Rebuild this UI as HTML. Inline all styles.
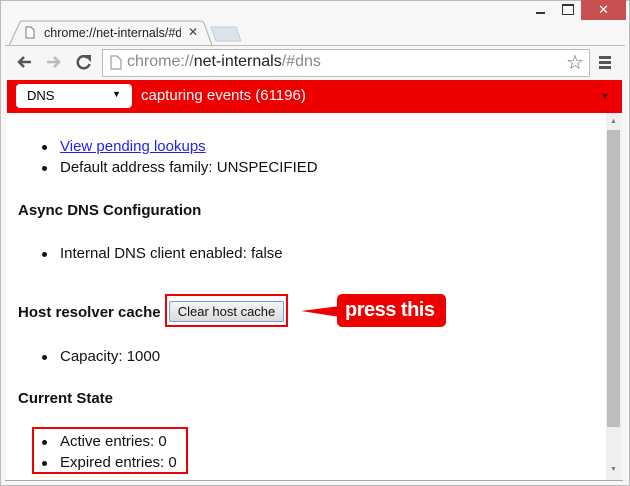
<!DOCTYPE html>
<html><head><style>
body{margin:0;width:630px;height:486px;background:#fff;position:relative;overflow:hidden;font-family:"Liberation Sans",sans-serif}
.a{position:absolute}
.t{position:absolute;font-size:15px;color:#111;white-space:nowrap}
.b{font-weight:bold}
.dot{position:absolute;width:5px;height:5px;border-radius:50%;background:#111}
</style></head><body>
<div class="a" style="left:0;top:0;width:628px;height:484px;border:1px solid #bbb;background:#f7f7f7"></div>
<!-- window controls -->
<div class="a" style="left:536px;top:12px;width:9px;height:2px;background:#333"></div>
<div class="a" style="left:562px;top:4px;width:10px;height:8px;border:1px solid #333;border-top-width:2px"></div>
<div class="a" style="left:581px;top:0;width:45px;height:20px;background:#c75050;color:#fff;font-size:13px;text-align:center;line-height:20px">✕</div>
<!-- tab -->
<svg class="a" style="left:0;top:18px" width="250" height="30"><path d="M8 30 L20 4 Q21 3 23 3 L200 3 Q203 3 204 5 L213 30" fill="#f6f6f6" stroke="#aaa"/><path d="M211 9 L236 9 L241 23 L216 23 Z" fill="#dde3ea" stroke="#c5ccd5"/></svg>
<svg class="a" style="left:25px;top:26px" width="10" height="13"><path d="M1 1h5l3 3v8H1z" fill="#fff" stroke="#777"/></svg>
<div class="a" style="left:44px;top:26px;font-size:12.5px;color:#222;width:137px;overflow:hidden;white-space:nowrap">chrome://net-internals/#dns</div>
<div class="a" style="left:188px;top:25px;font-size:12px;color:#444">✕</div>
<div class="a" style="left:5px;top:45px;width:620px;height:35px;background:#f6f6f6;border-top:1px solid #bbb"></div>
<svg class="a" style="left:16px;top:54px" width="80" height="16"><path d="M15 8H3M8 3L3 8l5 5" fill="none" stroke="#555" stroke-width="2.5"/><path d="M31 8h12M38 3l5 5-5 5" fill="none" stroke="#bbb" stroke-width="2.5"/><path d="M72 4a6 6 0 1 0 1.5 6" fill="none" stroke="#555" stroke-width="2.5"/><path d="M68 1h7v7z" fill="#555"/></svg>
<div class="a" style="left:102px;top:49px;width:486px;height:26px;border:1px solid #bbb;background:#fff"></div>
<svg class="a" style="left:110px;top:55px" width="12" height="15"><path d="M1 1h6l4 4v9H1z" fill="#fff" stroke="#888"/></svg>
<div class="a" style="left:127px;top:53px;font-size:16px;color:#888;white-space:nowrap">chrome://<span style="color:#222">net-internals</span>/#dns</div>
<div class="a" style="left:566px;top:50px;font-size:20px;color:#666">☆</div>
<div class="a" style="left:599px;top:56px;width:12px;height:3px;background:#555;box-shadow:0 5px #555,0 10px #555"></div>
<!-- red bar -->
<div class="a" style="left:7px;top:80px;width:615px;height:33px;background:#ee0000"></div>
<div class="a" style="left:16px;top:84px;width:116px;height:24px;background:#fff;border-radius:4px"></div>
<div class="a" style="left:27px;top:88px;font-size:13px;color:#000">DNS</div>
<div class="a" style="left:112px;top:89px;font-size:9px;color:#000">▼</div>
<div class="a" style="left:141px;top:87px;font-size:15px;color:#fff">capturing events (61196)</div>
<div class="a" style="left:601px;top:92px;font-size:8px;color:#000">▼</div>
<!-- content -->
<div class="a" style="left:6px;top:113px;width:600px;height:367px;background:#fff"></div>
<div class="a" style="left:606px;top:113px;width:16px;height:367px;background:#f0f0f0"></div>
<div class="a" style="left:607px;top:130px;width:13px;height:297px;background:#bdbdbd"></div>
<div class="a" style="left:610px;top:118px;font-size:7px;color:#777">▲</div>
<div class="a" style="left:610px;top:466px;font-size:7px;color:#777">▼</div>
<div class="a" style="left:5px;top:480px;width:618px;height:1px;background:#aaa"></div>

<div class="dot" style="left:42px;top:145px"></div><div class="t" style="left:60px;top:138px;text-decoration:underline;color:#2222ee">View pending lookups</div>
<div class="dot" style="left:42px;top:166px"></div><div class="t" style="left:60px;top:159px">Default address family: UNSPECIFIED</div>
<div class="t b" style="left:18px;top:202px">Async DNS Configuration</div>
<div class="dot" style="left:42px;top:252px"></div><div class="t" style="left:60px;top:245px">Internal DNS client enabled: false</div>
<div class="t b" style="left:18px;top:304px">Host resolver cache</div>
<div class="a" style="left:165px;top:294px;width:123px;height:33px;border:2px solid #e00;box-sizing:border-box"></div>
<div class="a" style="left:169px;top:301px;width:115px;height:21px;border:1px solid #7a9cd3;background:linear-gradient(#f4f4f4,#dcdcdc);border-radius:2px;box-sizing:border-box;font-size:13px;text-align:center;line-height:19px;color:#111">Clear host cache</div>
<svg class="a" style="left:298px;top:294px" width="150" height="34"><path d="M3 17 L42 12 L42 23 Z" fill="#ee0000"/><rect x="39" y="0" width="109" height="33" rx="5" fill="#ee0000"/></svg>
<div class="a" style="left:345px;top:299px;font-size:20px;color:#fff;font-weight:bold;letter-spacing:-0.5px">press this</div>
<div class="dot" style="left:42px;top:355px"></div><div class="t" style="left:60px;top:348px">Capacity: 1000</div>
<div class="t b" style="left:18px;top:390px">Current State</div>
<div class="a" style="left:32px;top:427px;width:156px;height:47px;border:2px solid #e00;box-sizing:border-box"></div>
<div class="dot" style="left:42px;top:440px"></div><div class="t" style="left:60px;top:433px">Active entries: 0</div>
<div class="dot" style="left:42px;top:461px"></div><div class="t" style="left:60px;top:454px">Expired entries: 0</div>
</body></html>
